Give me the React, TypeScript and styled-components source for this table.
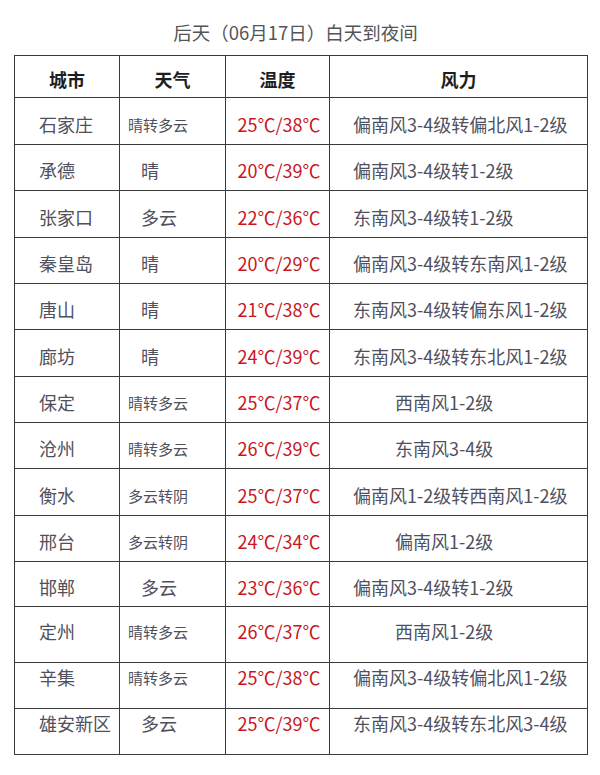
import React from "react";
import styled, { createGlobalStyle } from "styled-components";

const GlobalStyle = createGlobalStyle`
  html, body {
    margin: 0;
    padding: 0;
    background: #ffffff;
  }
  body {
    font-family: "Noto Sans CJK SC", "Noto Sans", sans-serif;
  }
`;

const Page = styled.div`
  width: 600px;
  height: 775px;
  box-sizing: border-box;
  padding: 20px 13px 0 14px;
  display: flex;
  flex-direction: column;
  align-items: stretch;
`;

const Title = styled.h1`
  margin: 0;
  height: 35px;
  font-size: 18.5px;
  font-weight: 400;
  line-height: 24px;
  color: #555555;
  text-align: center;
  padding-right: 10px;
`;

const Table = styled.table`
  width: 573px;
  border-collapse: collapse;
  table-layout: fixed;
  border: 1px solid #3a3a3a;
`;

const HeadRow = styled.tr`
  height: 42px;
`;

const HeadCell = styled.th`
  border: 1px solid #3a3a3a;
  padding: 4px 0 0 0;
  font-size: 18px;
  font-weight: 700;
  color: #1e1e1e;
  text-align: center;
  vertical-align: middle;
  line-height: 24px;
`;

const Row = styled.tr<{ $h: number }>`
  height: ${(p) => p.$h}px;
`;

const Cell = styled.td<{ $top?: number; $padLeft?: number; $center?: boolean }>`
  border: 1px solid #3a3a3a;
  box-sizing: border-box;
  padding: ${(p) => (p.$top !== undefined ? `${p.$top}px` : "6px")} 0 0
    ${(p) => (p.$center ? 0 : p.$padLeft ?? 0)}px;
  vertical-align: ${(p) => (p.$top !== undefined ? "top" : "middle")};
  text-align: ${(p) => (p.$center ? "center" : "left")};
  line-height: 24px;
  white-space: nowrap;
  overflow: hidden;
`;

const CityText = styled.span`
  font-size: 18px;
  color: #50505c;
`;

const WeatherText = styled.span<{ $small: boolean }>`
  font-size: ${(p) => (p.$small ? 15 : 18)}px;
  color: #50505c;
`;

const TempText = styled.span`
  font-size: 18px;
  color: #c8161d;
  padding-left: 3px;
`;

const WindText = styled.span`
  font-size: 18px;
  color: #50505c;
`;

type RowData = {
  city: string;
  weather: string;
  temp: string;
  wind: string;
  windIndent?: boolean;
  h: number;
  top?: number;
};

const rows: RowData[] = [
  { city: "石家庄", weather: "晴转多云", temp: "25℃/38℃", wind: "偏南风3-4级转偏北风1-2级", h: 47 },
  { city: "承德", weather: "晴", temp: "20℃/39℃", wind: "偏南风3-4级转1-2级", h: 46 },
  { city: "张家口", weather: "多云", temp: "22℃/36℃", wind: "东南风3-4级转1-2级", h: 47 },
  { city: "秦皇岛", weather: "晴", temp: "20℃/29℃", wind: "偏南风3-4级转东南风1-2级", h: 46 },
  { city: "唐山", weather: "晴", temp: "21℃/38℃", wind: "东南风3-4级转偏东风1-2级", h: 46 },
  { city: "廊坊", weather: "晴", temp: "24℃/39℃", wind: "东南风3-4级转东北风1-2级", h: 47 },
  { city: "保定", weather: "晴转多云", temp: "25℃/37℃", wind: "西南风1-2级", windIndent: true, h: 46 },
  { city: "沧州", weather: "晴转多云", temp: "26℃/39℃", wind: "东南风3-4级", windIndent: true, h: 46 },
  { city: "衡水", weather: "多云转阴", temp: "25℃/37℃", wind: "偏南风1-2级转西南风1-2级", h: 47 },
  { city: "邢台", weather: "多云转阴", temp: "24℃/34℃", wind: "偏南风1-2级", windIndent: true, h: 46 },
  { city: "邯郸", weather: "多云", temp: "23℃/36℃", wind: "偏南风3-4级转1-2级", h: 45 },
  { city: "定州", weather: "晴转多云", temp: "26℃/37℃", wind: "西南风1-2级", windIndent: true, h: 56, top: 12 },
  { city: "辛集", weather: "晴转多云", temp: "25℃/38℃", wind: "偏南风3-4级转偏北风1-2级", h: 46, top: 2 },
  { city: "雄安新区", weather: "多云", temp: "25℃/39℃", wind: "东南风3-4级转东北风3-4级", h: 46, top: 2 },
];

export default function App() {
  return (
    <>
      <GlobalStyle />
      <Page>
        <Title>后天（06月17日）白天到夜间</Title>
        <Table>
          <colgroup>
            <col style={{ width: 105 }} />
            <col style={{ width: 106 }} />
            <col style={{ width: 104 }} />
            <col style={{ width: 258 }} />
          </colgroup>
          <thead>
            <HeadRow>
              <HeadCell>城市</HeadCell>
              <HeadCell>天气</HeadCell>
              <HeadCell>温度</HeadCell>
              <HeadCell>风力</HeadCell>
            </HeadRow>
          </thead>
          <tbody>
            {rows.map((r) => {
              const small = r.weather.length >= 4;
              return (
                <Row key={r.city} $h={r.h}>
                  <Cell $top={r.top} $padLeft={24}>
                    <CityText>{r.city}</CityText>
                  </Cell>
                  <Cell $top={r.top} $padLeft={small ? 8 : 21}>
                    <WeatherText $small={small}>{r.weather}</WeatherText>
                  </Cell>
                  <Cell $top={r.top} $center>
                    <TempText>{r.temp}</TempText>
                  </Cell>
                  <Cell $top={r.top} $padLeft={r.windIndent ? 65 : 23}>
                    <WindText>{r.wind}</WindText>
                  </Cell>
                </Row>
              );
            })}
          </tbody>
        </Table>
      </Page>
    </>
  );
}
